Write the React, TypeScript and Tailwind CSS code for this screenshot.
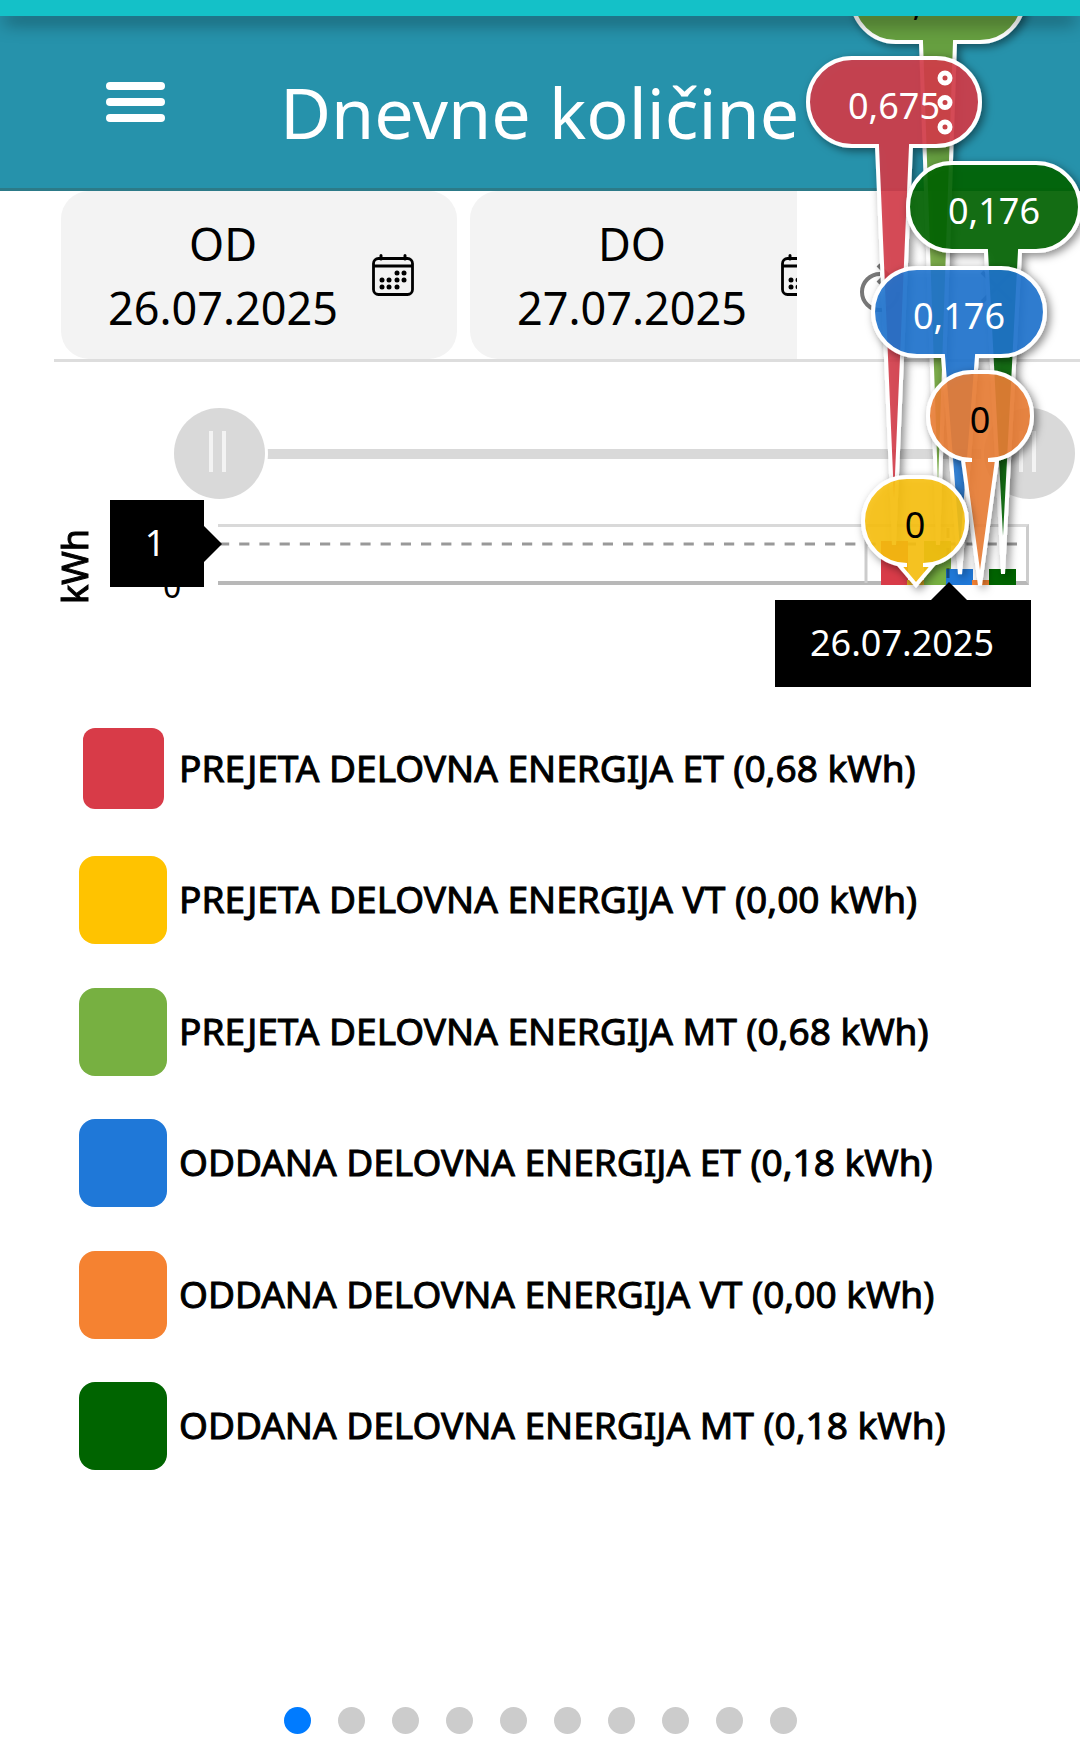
import React from 'react';

const LEGEND = [
    { color: '#d83b48', label: 'PREJETA DELOVNA ENERGIJA ET (0,68 kWh)', active: true },
    { color: '#ffc300', label: 'PREJETA DELOVNA ENERGIJA VT (0,00 kWh)' },
    { color: '#77b041', label: 'PREJETA DELOVNA ENERGIJA MT (0,68 kWh)' },
    { color: '#1f78d8', label: 'ODDANA DELOVNA ENERGIJA ET (0,18 kWh)' },
    { color: '#f58231', label: 'ODDANA DELOVNA ENERGIJA VT (0,00 kWh)' },
    { color: '#006400', label: 'ODDANA DELOVNA ENERGIJA MT (0,18 kWh)' }
];

// Bubble geometry: left/right edge, top edge, pointer centre and tip
const CALLOUTS = [
    { value: '0,675', fill: '#70a53a', text: '#000', left: 852, right: 1024, top: -46, px: 938, tip: 545 },
    { value: '0,675', fill: '#d63c4a', text: '#fff', left: 808, right: 980, top: 58, px: 894, tip: 545 },
    { value: '0,176', fill: '#006400', text: '#fff', left: 908, right: 1080, top: 163, px: 1003, tip: 574 },
    { value: '0,176', fill: '#2074d2', text: '#fff', left: 873, right: 1045, top: 268, px: 960, tip: 574 },
    { value: '0', fill: '#ee8034', text: '#000', left: 928, right: 1032, top: 372, px: 980, tip: 585 },
    { value: '0', fill: '#fcc210', text: '#000', left: 863, right: 967, top: 477, px: 916, tip: 585 }
];

const COLUMNS = [
    { color: '#d83b48', x: 881, w: 27, y: 541 },
    { color: '#d9a520', x: 907, w: 17, y: 580 },
    { color: '#77b041', x: 924, w: 27, y: 541 },
    { color: '#1f78d8', x: 946, w: 27, y: 569 },
    { color: '#f58231', x: 972, w: 17, y: 580 },
    { color: '#006400', x: 989, w: 27, y: 569 }
];

function CalendarIcon() {
    const days = [[25, 19], [32, 19], [10, 26], [17, 26], [25, 26], [32, 26], [10, 33], [17, 33], [25, 33]];
    return (
        <svg width="42" height="42" viewBox="0 0 42 42" fill="none" stroke="#000" className="shrink-0" aria-hidden="true">
            <rect x="1.5" y="4.5" width="39" height="36" rx="5" strokeWidth="2.8" />
            <path d="M1.5 12H40.5" strokeWidth="3" />
            <path d="M9 1.5V5M33 1.5V5" strokeWidth="3" strokeLinecap="round" />
            {days.map(([x, y]) => (
                <circle key={`${x}-${y}`} cx={x} cy={y} r="2.5" fill="#000" stroke="none" />
            ))}
        </svg>
    );
}

function DateCard({ label, value }: { label: string; value: string }) {
    return (
        <button
            type="button"
            className="flex h-[168px] w-[396px] shrink-0 items-center gap-[34px] rounded-[28px] bg-[#f3f3f3] pl-[47px] text-[45px] leading-[64px] text-black"
        >
            <span className="flex flex-col items-center pt-0.5">
                <span>{label}</span>
                <span>{value}</span>
            </span>
            <CalendarIcon />
        </button>
    );
}

function calloutPath(c: (typeof CALLOUTS)[number]) {
    const r = 44;
    const bottom = c.top + 88;
    return [
        `M${c.left + r} ${c.top}`,
        `H${c.right - r}`,
        `A${r} ${r} 0 0 1 ${c.right - r} ${bottom}`,
        `H${c.px + 17}`,
        `L${c.px} ${c.tip}`,
        `L${c.px - 17} ${bottom}`,
        `H${c.left + r}`,
        `A${r} ${r} 0 0 1 ${c.left + r} ${c.top}`,
        'Z'
    ].join(' ');
}

function Callouts() {
    return (
        <svg
            className="pointer-events-none absolute top-0 right-0 z-10 h-[620px] w-[300px]"
            viewBox="780 0 300 620"
            fontFamily='"Noto Sans", sans-serif'
            fontSize="36"
            textAnchor="middle"
        >
            <defs>
                <filter id="callout-shadow" filterUnits="userSpaceOnUse" x="780" y="-60" width="320" height="700">
                    <feDropShadow dx="3" dy="3" stdDeviation="4" floodColor="#000" floodOpacity="0.5" />
                </filter>
            </defs>
            {CALLOUTS.map((c) => (
                <g key={c.top}>
                    <path
                        d={calloutPath(c)}
                        fill={c.fill}
                        fillOpacity="0.86"
                        stroke="#fff"
                        strokeWidth="4"
                        filter="url(#callout-shadow)"
                    />
                    <text x={(c.left + c.right) / 2} y={c.top + 61} fill={c.text}>{c.value}</text>
                </g>
            ))}
        </svg>
    );
}

function RangeSlider() {
    const input =
        'pointer-events-none absolute inset-0 h-[91px] w-full appearance-none bg-transparent [&::-webkit-slider-thumb]:pointer-events-auto [&::-webkit-slider-thumb]:h-[91px] [&::-webkit-slider-thumb]:w-[91px] [&::-webkit-slider-thumb]:appearance-none [&::-webkit-slider-thumb]:rounded-full [&::-webkit-slider-thumb]:bg-[#d9d9d9] [&::-webkit-slider-thumb]:bg-[linear-gradient(90deg,#f3f3f3_4px,transparent_4px,transparent_13px,#f3f3f3_13px)] [&::-webkit-slider-thumb]:bg-[length:17px_41px] [&::-webkit-slider-thumb]:bg-[position:35px_23px] [&::-webkit-slider-thumb]:bg-no-repeat [&::-webkit-slider-thumb]:shadow-[0_0_0_3px_#fff]';
    return (
        <div className="relative mt-[46px] mr-[5px] ml-[174px] flex h-[91px] items-center">
            <div className="mx-12 h-[10px] flex-1 bg-[#d9d9d9]" />
            <input type="range" aria-label="Začetek obdobja" defaultValue={0} className={input} />
            <input type="range" aria-label="Konec obdobja" defaultValue={100} className={input} />
        </div>
    );
}

function Chart() {
    return (
        <div className="relative mt-[25px] flex h-[61px] pr-[51px]">
            <div className="w-[218px] shrink-0" />
            <div className="relative flex-1 border-t-[3px] border-r-[3px] border-b-[4px] border-t-[#d9d9d9] border-r-[#ccc] border-b-[#b8b8b8]">
                <svg className="absolute inset-0 h-full w-full" aria-hidden="true">
                    <line x1="1" x2="100%" y1="17" y2="17" stroke="#999" strokeWidth="3" strokeDasharray="10.2 10" />
                </svg>
            </div>
            <svg className="absolute top-0 right-0 h-[61px] w-[300px]" viewBox="780 524 300 61">
                <path d="M866 526V583" stroke="#ccc" strokeWidth="3" />
                {COLUMNS.map((c) => (
                    <rect key={c.x} x={c.x} y={c.y} width={c.w} height={585 - c.y} fill={c.color} />
                ))}
                <path d="M948 528V585" stroke="#000" strokeOpacity="0.4" strokeWidth="3" strokeDasharray="10 10" />
            </svg>

            {/* Axis title and scale */}
            <div className="absolute -top-0.5 left-[51px] h-[90px] w-12 rotate-180 text-center text-[36px] leading-[48px] [-webkit-text-stroke:1px_black] [writing-mode:vertical-rl]">
                kWh
            </div>
            <div className="absolute top-[41px] left-[163px] text-[32px] leading-[42px]">0</div>

            {/* Cursor labels */}
            <div className="absolute -top-6 left-[110px] flex items-center">
                <div className="flex h-[87px] w-[94px] items-center justify-center bg-black pr-1 pb-0.5 text-[36px] leading-[48px] text-white">1</div>
                <svg width="18" height="36" viewBox="0 0 18 36"><path d="M0 0L18 18L0 36Z" /></svg>
            </div>
            <div className="absolute top-[58px] right-[49px] z-20 w-[256px]">
                <svg width="36" height="18" viewBox="0 0 36 18" className="ml-[156px] block"><path d="M0 18L18 0L36 18Z" /></svg>
                <div className="flex h-[87px] items-center justify-center bg-black pr-0.5 pb-0.5 text-[36px] leading-[48px] text-white">26.07.2025</div>
            </div>
        </div>
    );
}

export default function App() {
    return (
        <div className="relative min-h-screen overflow-hidden bg-white font-['Noto_Sans',sans-serif] text-black">
            <div className="absolute inset-x-0 top-0 z-30 h-4 bg-[#14c1c8] shadow-[0_10px_18px_-4px_rgba(0,0,0,0.55)]" />

            {/* App bar */}
            <header className="flex h-[191px] items-start border-b-[3px] border-[#2c7a88] bg-[#2692ab] pl-[106px] text-white">
                <button type="button" aria-label="Meni" className="mt-[82px] flex w-[59px] flex-col gap-2">
                    <span className="h-2 w-full rounded-full bg-white" />
                    <span className="h-2 w-full rounded-full bg-white" />
                    <span className="h-2 w-full rounded-full bg-white" />
                </button>
                <h1 className="mt-[64px] ml-[115px] flex-1 text-[70px] leading-[96px] whitespace-nowrap">Dnevne količine</h1>
                <button type="button" aria-label="Več možnosti" className="relative z-20 mt-[70px] mr-[127px]">
                    <svg width="16" height="65" viewBox="0 0 16 65" fill="none" stroke="#fff" strokeWidth="5">
                        <circle cx="8" cy="8" r="5" />
                        <circle cx="8" cy="32.5" r="5" />
                        <circle cx="8" cy="57" r="5" />
                    </svg>
                </button>
            </header>

            {/* Date range */}
            <div className="ml-[54px] flex border-b-[3px] border-[#ddd] pl-[7px]">
                <div className="flex flex-1 gap-[13px] overflow-hidden">
                    <DateCard label="OD" value="26.07.2025" />
                    <DateCard label="DO" value="27.07.2025" />
                </div>
                <div className="flex w-[283px] shrink-0 items-center pt-6 pl-[62px]">
                    <button type="button" aria-label="Osveži">
                        <svg width="44" height="56" viewBox="0 0 44 56" fill="none" stroke="#777" strokeWidth="4">
                            <path d="M21 15A18 18 0 1 0 39 33" />
                            <path d="M19 6L28 15L19 24" />
                        </svg>
                    </button>
                    <button type="button" aria-label="Zapri" className="ml-[76px]">
                        <svg width="36" height="36" viewBox="0 0 36 36" stroke="#777" strokeWidth="4">
                            <path d="M3 3L33 33M33 3L3 33" />
                        </svg>
                    </button>
                </div>
            </div>

            <RangeSlider />
            <Chart />

            {/* Legend */}
            <ul className="mt-[118px] grid h-[789px] grid-rows-6 pl-[79px]">
                {LEGEND.map((item) => (
                    <li key={item.label} className="flex items-center gap-3">
                        <span className="flex w-[88px] justify-center">
                            <span
                                className={item.active ? 'h-[81px] w-[81px] rounded-xl' : 'h-[88px] w-[88px] rounded-2xl'}
                                style={{ backgroundColor: item.color }}
                            />
                        </span>
                        <span className="pb-0.5 text-[37px] leading-[48px] whitespace-nowrap [-webkit-text-stroke:1px_black]">{item.label}</span>
                    </li>
                ))}
            </ul>

            {/* Pager */}
            <nav aria-label="Strani" className="mt-[215px] flex justify-center gap-[27px] pb-5">
                {Array.from({ length: 10 }, (_, i) => (
                    <button
                        key={i}
                        type="button"
                        aria-label={`Stran ${i + 1}`}
                        className={`h-[27px] w-[27px] rounded-full ${i === 0 ? 'bg-[#007bff]' : 'bg-[#ccc]'}`}
                    />
                ))}
            </nav>

            <Callouts />
        </div>
    );
}
